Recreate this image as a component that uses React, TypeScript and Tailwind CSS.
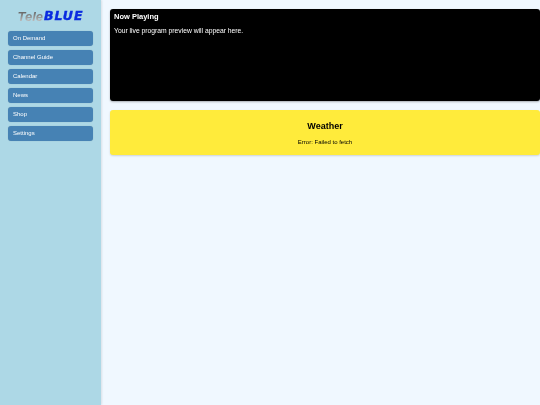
const menuItems = ["On Demand", "Channel Guide", "Calendar", "News", "Shop", "Settings"];

export default function App() {
  return (
    <div className="flex h-[405px] w-[540px] overflow-hidden bg-[#f0f8ff] font-['Liberation_Sans',Arial,sans-serif] antialiased opacity-[0.999]">
      <aside className="flex w-[101px] shrink-0 flex-col bg-[#add8e6] px-2 pt-[8px] shadow-[1px_0_2px_rgba(0,0,0,0.1)]">
        <div className="mb-[7px] flex h-[16px] items-center justify-center leading-none font-bold italic">
          <span className="bg-gradient-to-b from-[#555555] to-[#cfcfcf] bg-clip-text pr-[1px] text-[13px] text-transparent">Tele</span>
          <span className="font-['DejaVu_Sans',sans-serif] text-[12.5px] tracking-[1px] text-[#0a2be0] [-webkit-text-stroke:0.4px_#0a2be0]">BLUE</span>
        </div>
        <nav className="flex flex-col gap-[4px]">
          {menuItems.map((item) => (
            <div
              key={item}
              className="flex h-[15px] items-center rounded-[3px] bg-[#4682b4] pl-[5px] text-[6px] text-white shadow-[0_0_1px_rgba(0,0,0,0.2)]"
            >
              {item}
            </div>
          ))}
        </nav>
      </aside>
      <main className="flex min-w-0 flex-1 flex-col gap-[9px] pt-[9px] pl-[9px]">
        <section className="h-[92px] rounded-[3px] bg-black px-[4px] pt-[3px] text-white shadow-[0_1px_2px_rgba(0,0,0,0.3)]">
          <h2 className="text-[7.5px] leading-[10px] font-bold">Now Playing</h2>
          <p className="mt-[5px] text-[6.75px] leading-[8px]">Your live program preview will appear here.</p>
        </section>
        <section className="flex h-[45px] flex-col items-center rounded-[3px] bg-[#ffeb3b] pt-[10px] text-black shadow-[0_1px_2px_rgba(0,0,0,0.15)]">
          <h2 className="text-[9px] leading-[12px] font-bold">Weather</h2>
          <p className="mt-[6px] text-[6px] leading-[8px]">Error: Failed to fetch</p>
        </section>
      </main>
    </div>
  );
}
